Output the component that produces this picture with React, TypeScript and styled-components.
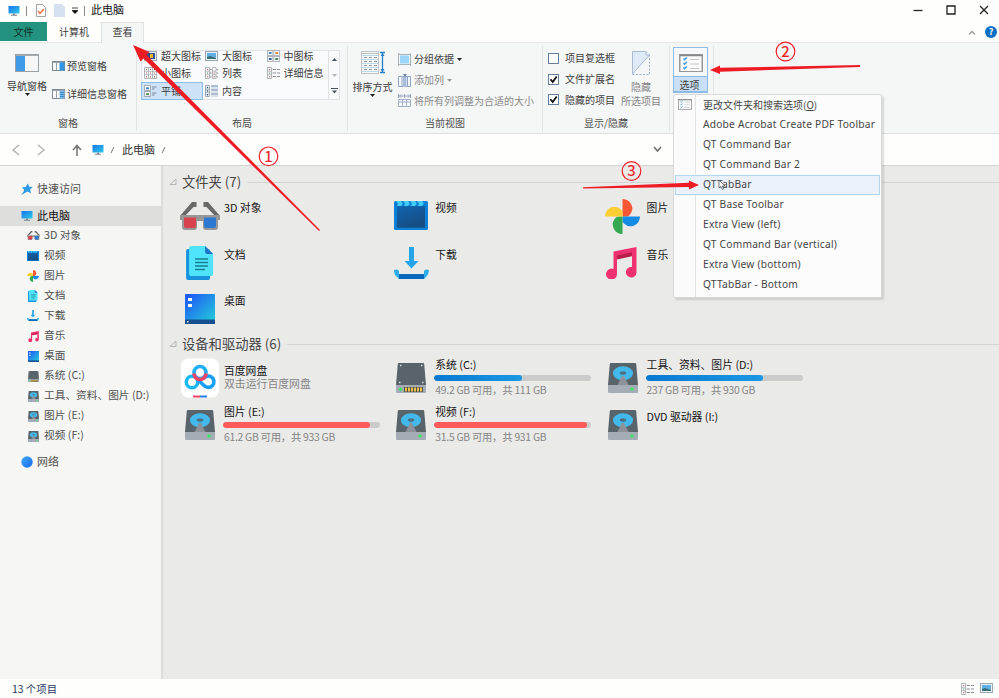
import React from "react";
import styled, { createGlobalStyle, css } from "styled-components";

const Global = createGlobalStyle`
  * { box-sizing: border-box; }
  html, body { margin: 0; padding: 0; overflow: hidden; }
  body { font-family: "Noto Sans CJK SC", sans-serif; font-size: 10px; color: #3c3c3c; background: #fefefd; }
  svg { display: block; flex: none; }
`;

const Window = styled.div`
  position: relative;
  width: 999px;
  height: 698px;
  display: flex;
  flex-direction: column;
  overflow: hidden;
  background: #fefefd;
  white-space: nowrap;
`;

/* ---------- title bar ---------- */
const TitleBar = styled.header`
  height: 22px;
  display: flex;
  align-items: flex-start;
  padding: 0 10px 0 8px;
`;
const QuickAccess = styled.div`
  display: flex;
  align-items: center;
  height: 21px;
`;
const Gap = styled.span<{ $w: number }>`
  width: ${(p) => p.$w}px;
  flex: none;
`;
const Divider = styled.span`
  width: 1px;
  height: 10px;
  background: #8a8a8a;
`;
const Title = styled.span`
  font-size: 11px;
  line-height: 18px;
  padding-bottom: 3px;
  color: #111;
`;
const Controls = styled.div`
  margin-left: auto;
  display: flex;
  align-items: center;
  gap: 23px;
  height: 20px;
`;

/* ---------- tabs ---------- */
const TabRow = styled.nav`
  height: 21px;
  display: flex;
  border-bottom: 1px solid #e8e8e8;
  padding-right: 2px;
`;
const Tab = styled.div<{ $kind?: "file" | "active" }>`
  height: 21px;
  line-height: 20px;
  text-align: center;
  color: #404040;
  width: 54px;
  ${(p) =>
    p.$kind === "file" &&
    css`
      width: 47px;
      height: 19px;
      line-height: 19px;
      background: #23927f;
      color: #10302b;
    `}
  ${(p) =>
    p.$kind === "active" &&
    css`
      width: 43px;
      background: #f5f6f6;
      border: 1px solid #e2e4e4;
      border-bottom: 0;
      line-height: 18px;
    `}
`;
const TabTools = styled.div`
  margin-left: auto;
  display: flex;
  align-items: center;
  gap: 9px;
`;

/* ---------- ribbon ---------- */
const Ribbon = styled.section`
  height: 91px;
  display: flex;
  background: #f5f6f6;
  border-bottom: 1px solid #dededf;
`;
const Group = styled.div<{ $w: number }>`
  width: ${(p) => p.$w}px;
  height: 85px;
  margin-top: 3px;
  display: flex;
  flex-direction: column;
  border-right: 1px solid #e2e3e3;
`;
const GroupBody = styled.div<{ $left: number }>`
  height: 68px;
  display: flex;
  align-items: flex-start;
  padding-left: ${(p) => p.$left}px;
`;
const GroupLabel = styled.div`
  line-height: 17px;
  height: 17px;
  text-align: center;
  margin-top: 2px;
  color: #505050;
`;
const BigButton = styled.div<{ $w: number; $dim?: boolean; $top?: number }>`
  width: ${(p) => p.$w}px;
  flex: none;
  height: 60px;
  padding-top: ${(p) => p.$top ?? 5}px;
  display: flex;
  flex-direction: column;
  align-items: center;
  color: ${(p) => (p.$dim ? "#858585" : "#3c3c3c")};
`;
const BigLabel = styled.span<{ $mt: number }>`
  line-height: 13.5px;
  margin-top: ${(p) => p.$mt}px;
`;
const SmallColumn = styled.div<{ $pitch: number; $top: number; $left: number }>`
  display: grid;
  grid-auto-rows: ${(p) => p.$pitch}px;
  margin: ${(p) => p.$top}px 0 0 ${(p) => p.$left}px;
`;
const SmallButton = styled.div<{ $dim?: boolean; $gap?: number }>`
  display: flex;
  align-items: center;
  gap: ${(p) => p.$gap ?? 2}px;
  line-height: 14px;
  color: ${(p) => (p.$dim ? "#8b8b8b" : "#404040")};
`;
const Gallery = styled.div`
  margin-top: 4px;
  width: 199px;
  height: 50px;
  display: flex;
  border: 1px solid #e1e3e6;
  background: #f9fafb;
`;
const GalleryGrid = styled.div`
  width: 186px;
  display: grid;
  grid-template-columns: 61px 61.5px 63.5px;
  grid-template-rows: 14px 17.5px 18px;
  margin-top: -1px;
`;
const GalleryItem = styled.div<{ $on?: boolean; $lift?: boolean }>`
  display: flex;
  align-items: center;
  gap: 4px;
  padding-left: 2px;
  margin-left: -1px;
  margin-top: ${(p) => (p.$lift ? -2 : 0)}px;
  line-height: 14px;
  border: 1px solid ${(p) => (p.$on ? "#8fbfe8" : "transparent")};
  background: ${(p) => (p.$on ? "#cde2f7" : "transparent")};
`;
const GalleryScroll = styled.div`
  width: 12px;
  border-left: 1px solid #e1e3e6;
  display: grid;
  grid-template-rows: repeat(3, 1fr);
  place-items: center;
`;
const CheckBox = styled.span`
  width: 11px;
  height: 11px;
  border: 1px solid #65809f;
  background: #fff;
`;
const OptionsButton = styled.div`
  width: 35px;
  height: 46px;
  margin-top: 1px;
  border: 1px solid #8dbbe5;
  display: flex;
  flex-direction: column;
  align-items: center;
  padding-top: 6px;
  background: #f6f7f8;
`;
const OptionsLabel = styled.div`
  width: 35px;
  margin-top: auto;
  height: 16px;
  line-height: 15px;
  padding-right: 2px;
  text-align: center;
  background: #c9dff5;
  border: 1px solid #8dbbe5;
`;

/* ---------- address bar ---------- */
const Address = styled.div`
  height: 32px;
  display: flex;
  align-items: center;
  padding-left: 11px;
  border-bottom: 1px solid #d4d4d4;
  font-size: 11px;
  color: #303030;
`;

/* ---------- body ---------- */
const Main = styled.div`
  height: 513px;
  display: flex;
`;
const Sidebar = styled.aside`
  width: 163px;
  flex: none;
  background: #f6f6f5;
  border-right: 2px solid #dcdcdc;
  padding-top: 13px;
`;
const TreeItem = styled.div<{ $level: 0 | 1; $on?: boolean; $after?: number }>`
  height: 20px;
  display: flex;
  align-items: center;
  font-size: ${(p) => (p.$level ? 10.7 : 11)}px;
  line-height: 18px;
  gap: ${(p) => (p.$level ? 5 : 4)}px;
  padding-left: ${(p) => (p.$level ? 27 : 21)}px;
  margin-bottom: ${(p) => p.$after ?? 0}px;
  color: ${(p) => (p.$on ? "#111" : "#505050")};
  background: ${(p) => (p.$on ? "#dededd" : "transparent")};
`;
const TreeLabel = styled.span`
  height: 20px;
`;
const Content = styled.main`
  flex: 1;
  background: #eaeae9;
  padding: 6px 0 0 6px;
`;
const Section = styled.section<{ $h: number }>`
  height: ${(p) => p.$h}px;
`;
const SectionHead = styled.div`
  height: 20px;
  display: flex;
  align-items: center;
  font-size: 13.3px;
  line-height: 20px;
  color: #454545;
  gap: 5px;
  &::after {
    content: "";
    flex: 1;
    height: 1px;
    background: #d4d4d4;
    margin-left: 1px;
  }
`;
const Tiles = styled.div`
  display: grid;
  grid-template-columns: repeat(3, 211.3px);
  grid-auto-rows: 46.6px;
  padding-left: 11px;
`;
const Tile = styled.div`
  display: flex;
  gap: 4px;
`;
const TileIcon = styled.div<{ $shift?: number }>`
  width: 40px;
  height: 48px;
  flex: none;
  display: flex;
  align-items: center;
  justify-content: center;
  padding-right: ${(p) => p.$shift ?? 0}px;
`;
const TileText = styled.div<{ $pad: number }>`
  padding-top: ${(p) => p.$pad}px;
  font-size: 10.8px;
  line-height: 14px;
  color: #151515;
`;
const Sub = styled.div<{ $narrow?: boolean }>`
  color: #858585;
  line-height: 13px;
  font-size: ${(p) => (p.$narrow ? 10.4 : 10.85)}px;
  letter-spacing: ${(p) => (p.$narrow ? -0.28 : 0)}px;
  margin-top: ${(p) => (p.$narrow ? 2 : 0)}px;
`;
const Meter = styled.div`
  width: 157px;
  height: 6px;
  margin: 4px 0 0 -1px;
  border-radius: 3px;
  background: #cbcbcb;
  overflow: hidden;
`;
const MeterFill = styled.div<{ $full?: boolean }>`
  height: 100%;
  border-radius: 3px;
  background: ${(p) => (p.$full ? "#fd5b59" : "linear-gradient(90deg,#0779d2,#1c97e2)")};
`;
const Status = styled.footer`
  height: 19px;
  display: flex;
  align-items: center;
  justify-content: space-between;
  padding: 0 6px 0 12px;
  font-size: 10.4px;
  line-height: 19px;
  color: #1e3763;
`;
const StatusViews = styled.div`
  display: flex;
  align-items: center;
  gap: 6px;
`;

/* ---------- drop-down menu ---------- */
const Menu = styled.div`
  position: absolute;
  left: 673px;
  top: 94px;
  width: 209px;
  height: 204px;
  border: 1px solid #d8d8d8;
  border-radius: 2px;
  background: linear-gradient(90deg, #fbfbfb 21px, #e2e3e5 21px, #e2e3e5 22px, #fcfcfc 22px);
  box-shadow: 2px 2px 2px rgba(0, 0, 0, 0.12);
  padding: 0 1px;
`;
const MenuItem = styled.div<{ $on?: boolean; $cjk?: boolean }>`
  height: 20px;
  display: grid;
  grid-template-columns: 27px 1fr;
  align-items: start;
  line-height: ${(p) => (p.$cjk ? 17 : 16.5)}px;
  font-family: ${(p) => (p.$cjk ? '"Noto Sans CJK SC"' : '"Noto Sans", "Noto Sans CJK SC"')}, sans-serif;
  font-size: ${(p) => (p.$cjk ? 10 : 10.2)}px;
  letter-spacing: ${(p) => (p.$cjk ? 0 : 0.22)}px;
  color: #454545;
  border: 1px solid ${(p) => (p.$on ? "#b3d6f1" : "transparent")};
  background: ${(p) => (p.$on ? "#ebf1fb" : "transparent")};
`;
const MenuIcon = styled.span`
  padding: 3px 0 0 2px;
`;
const Overlay = styled.svg`
  position: absolute;
  left: 0;
  top: 0;
  pointer-events: none;
`;

/* ---------- icons ---------- */
const Monitor = ({ s = 12 }: { s?: number }) => (
  <svg width={s} height={s} viewBox="0 0 12 12">
    <defs>
      <linearGradient id="mon" x1="0" y1="0" x2="1" y2="1">
        <stop offset="0" stopColor="#1775ee" />
        <stop offset="1" stopColor="#2fc9e6" />
      </linearGradient>
    </defs>
    <rect x="0.5" y="1" width="11" height="7.5" rx="0.5" fill="url(#mon)" />
    <path d="M5 8.5h2v1.2h2v1H3v-1h2z" fill="#7b8790" />
  </svg>
);
const Caret = ({ c = "#222", w = 5 }: { c?: string; w?: number }) => (
  <svg width={w} height="3" viewBox="0 0 5 3"><path d="M0 0h5L2.5 3z" fill={c} /></svg>
);
const PaneIcon = ({ kind }: { kind: "nav" | "preview" | "detail" }) => {
  if (kind === "nav")
    return (
      <svg width="24" height="18" viewBox="0 0 24 18">
        <rect x="0.5" y="0.5" width="23" height="17" fill="#f6f6f6" stroke="#9aa0a4" />
        <path d="M1 1h22v1H1z" fill="#a5abaf" />
        <path d="M1 2h9v15H1z" fill="#3f9be8" />
      </svg>
    );
  return (
    <svg width="13" height="10" viewBox="0 0 13 10">
      <rect x="0.5" y="0.5" width="12" height="9" fill="#fafafa" stroke="#7f8a92" />
      <path d="M4.5 1v8M1 1.5h11" stroke="#9aa3aa" />
      <path d="M7.5 1.5h5v8h-5z" fill={kind === "preview" ? "#3195e4" : "#7bbcec"} />
      {kind === "detail" && <path d="M8 3.5h4M8 5.5h4M8 7.5h4" stroke="#397fb5" strokeWidth="0.8" />}
    </svg>
  );
};
const Picture = () => (
  <svg width="13" height="11" viewBox="0 0 13 11">
    <rect x="0.5" y="0.5" width="12" height="9" fill="#eaf3fa" stroke="#9aa5ad" />
    <path d="M2 2h9v4H2z" fill="#60aee8" />
    <path d="M2 8V6l3-1 3 1 3 .5V8z" fill="#386e75" />
  </svg>
);
const ExtraPicture = () => (
  <svg width="13" height="11" viewBox="0 0 13 11">
    <rect x="0.5" y="0.5" width="12" height="9" fill="#eef2f5" stroke="#9aa5ad" />
    <path d="M2 2h9v6H2z" fill="#2f4f88" />
    <path d="M6 3h3v4H6z" fill="#e5b53a" />
  </svg>
);
const ViewIcon = ({ kind }: { kind: "medium" | "small" | "list" | "details" | "tiles" | "content" }) => (
  <svg width="13" height="12" viewBox="0 0 13 12">
    {kind === "medium" &&
      [[0, 0], [6.5, 0], [0, 6], [6.5, 6]].map(([x, y]) => (
        <g key={`${x}-${y}`}>
          <rect x={x + 0.4} y={y + 0.4} width="5.5" height="5" fill="#fff" stroke="#9ba4ab" strokeWidth="0.8" />
          <rect x={x + 1.8} y={y + 2} width="2.8" height="2" fill={x ? (y ? "#51805d" : "#d78a3f") : y ? "#315fa2" : "#4c88c4"} />
        </g>
      ))}
    {kind === "small" && (
      <g>
        <path d="M0.5 0.5h12v11H.5zM4.5 0v12M8.5 0v12M0 4.2h13M0 7.8h13" fill="#fff" stroke="#abaeb2" strokeWidth="0.9" />
        <path d="M2 2.5h1M6 2.5h1M10 2.5h1M2 6h1M6 6h1M10 6h1M2 9.8h1M6 9.8h1M10 9.8h1" stroke="#a4544c" strokeWidth="1.2" />
      </g>
    )}
    {(kind === "list" || kind === "details") && (
      <g>
        <path d="M.5 .5h4v11h-4zM.5 4.2h4M.5 7.8h4" fill="#fff" stroke="#a9aeb3" strokeWidth="0.9" />
        <path d="M2 2.5h1.2M2 9.8h1.2" stroke="#c05a50" />
        <path d="M2 6h1.2" stroke="#418a5d" />
        {kind === "list" ? (
          <g>
            <path d="M7.5 .5h3.5v11H7.5zM7.5 4.2H11M7.5 7.8H11" fill="#fff" stroke="#a9aeb3" strokeWidth="0.9" />
            <path d="M5 2.5h1.6M5 6h1.6M5 9.8h1.6M11.5 2.5H13M11.5 6H13M11.5 9.8H13" stroke="#858b92" />
            <path d="M8.6 6h1.2M8.6 9.8h1.2" stroke="#a4544c" />
          </g>
        ) : (
          <path d="M5.5 2.5H9M10 2.5h3M5.5 6H9M10 6h3M5.5 9.5H9M10 9.5h3" stroke="#8b9299" />
        )}
      </g>
    )}
    {kind === "tiles" && (
      <g>
        <path d="M.5 .5h6v5h-6zM.5 6.5h6v5h-6z" fill="#fff" stroke="#97a3ad" strokeWidth="0.9" />
        <path d="M2 3.3h3" stroke="#3b86c9" strokeWidth="2" />
        <path d="M2 9.2h3" stroke="#508b51" strokeWidth="2" />
        <path d="M8 2h4.5M8 4h2.5M8 8h4.5M8 10h2.5" stroke="#7e8b99" />
      </g>
    )}
    {kind === "content" && (
      <g>
        <path d="M.5 .5h4v11h-4zM.5 4.2h4M.5 7.8h4" fill="#fff" stroke="#98a2ab" strokeWidth="0.9" />
        <path d="M1.7 2.4h1.6M1.7 6h1.6M1.7 9.8h1.6" stroke="#32649b" strokeWidth="1.5" />
        <path d="M6 1h7M6 5h7M6 9h7" stroke="#5d83a9" />
        <path d="M6 3h7M6 7h7M6 11h7" stroke="#bac9d8" />
      </g>
    )}
  </svg>
);
const SortIcon = () => (
  <svg width="24" height="24" viewBox="0 0 24 24">
    <rect x="0.5" y="0.5" width="17" height="22" fill="#f8fafa" stroke="#c0c4c7" />
    <path d="M1 2.5h16" stroke="#b9bec2" />
    <path d="M1 4.5h16M1 8.5h16M1 12.5h16M1 16.5h16M1 20.5h16" stroke="#b9d9e9" />
    <path d="M3 6.5h3M8 6.5h3M13 6.5h3M3 10.5h3M8 10.5h3M13 10.5h3M3 14.5h3M8 14.5h3M13 14.5h3M3 18.5h3M8 18.5h3M13 18.5h3" stroke="#8d969d" />
    <path d="M21.5 1v21M19 1.5h5M19 21.5h5" stroke="#267fc8" strokeWidth="1.3" />
    <path d="M19.5 5l2-3 2 3zM19.5 18l2 3 2-3z" fill="#267fc8" />
  </svg>
);
const GroupIcon = () => (
  <svg width="13" height="13" viewBox="0 0 13 13">
    <path d="M.5 0v13M12.5 0v13M0 1.5h13M0 11.5h13" stroke="#a9b2b9" />
    <path d="M2 2.5h9v8H2z" fill="#9bd5fa" />
  </svg>
);
const AddColumnIcon = () => (
  <svg width="13" height="13" viewBox="0 0 13 13">
    <path d="M.5 2.5h12v10H.5zM4 2v11M9.5 2v11" fill="#f5f8fd" stroke="#93a5c4" />
    <path d="M5 3h3.5v10H5z" fill="#a9bcdb" />
    <path d="M5 0h4L7 3z" fill="#6e86ac" />
  </svg>
);
const FitIcon = () => (
  <svg width="13" height="13" viewBox="0 0 13 13">
    <path d="M.5 0v4M12.5 0v4M1 2h11M3 .5L1.5 2 3 3.5M10 .5L11.5 2 10 3.5M6.5 0v4" stroke="#98a7c0" fill="none" />
    <path d="M.5 5.5h12v7H.5zM.5 8h12M4.5 5v8M8.5 5v8" fill="#f5f8fd" stroke="#a2afc8" />
  </svg>
);
const HideIcon = () => (
  <svg width="18" height="24" viewBox="0 0 18 24">
    <path d="M.5 .5H14l3.5 3.5L.5 23z" fill="#dfeaf7" stroke="#a9bad2" />
    <path d="M14 .5V4h3.5" fill="#f8fafc" stroke="#a9bad2" />
    <path d="M.5 23.5h17V4" fill="none" stroke="#9eb0ca" strokeDasharray="2 1.5" />
  </svg>
);
const OptionsIcon = ({ w = 24 }: { w?: number }) => (
  <svg width={w} height={w * 0.77} viewBox="0 0 24 18.5">
    <rect x="0.75" y="0.75" width="22.5" height="17" fill="#fbfbfb" stroke="#979797" strokeWidth="1.5" />
    <path d="M1 1.5h22" stroke="#868686" strokeWidth="1.5" />
    <path d="M4.5 4.5l1 1.2L8 3.5M4.5 9l1 1.2L8 8M4.5 13.5l1 1.2L8 12.5" fill="none" stroke="#3f9ce5" strokeWidth="1.5" />
    <path d="M11 5.5h9M11 10h9M11 14.5h9" stroke="#c3c6c9" strokeWidth="1.2" />
  </svg>
);
const Glasses = ({ s }: { s: number }) => (
  <svg width={s} height={s * 0.7} viewBox="0 0 40 28">
    <path d="M12 0h4.5v5h-3L5 14H0zM28 0h-4.500v5h3l8.500 9h5z" fill="#686868" />
    <path d="M0 13h40v5h-2v7q0 3-3 3H26q-3 0-3-3v-6h-6v6q0 3-3 3H5q-3 0-3-3v-7H0z" fill="#979797" />
    <path d="M4 15.5h12v8.500q0 2-2 2H6q-2 0-2-2z" fill="#d8424f" />
    <path d="M24 15.5h12v8.500q0 2-2 2h-8q-2 0-2-2z" fill="#2c78d2" />
  </svg>
);
const Video = ({ s }: { s: number }) => (
  <svg width={s} height={s * 0.86} viewBox="0 0 34 29">
    <defs>
      <linearGradient id="vid" x1="0" y1="0" x2="0.5" y2="1">
        <stop offset="0" stopColor="#1064ae" />
        <stop offset="1" stopColor="#174d84" />
      </linearGradient>
    </defs>
    <rect width="34" height="29" rx="1.5" fill="#0c7fd6" />
    <rect x="3" y="5" width="28" height="21.5" fill="url(#vid)" />
    <path d="M2 0h5q3 2.5 0 5H3q2-2.5-1-5zM9 0h5q3 2.5 0 5h-4q2-2.5-1-5zM16 0h5q3 2.5 0 5h-4q2-2.5-1-5zM23 0h5q3 2.5 0 5h-4q2-2.5-1-5z" fill="#42cdf8" />
  </svg>
);
const Photos = ({ s }: { s: number }) => (
  <svg width={s} height={s} viewBox="0 0 35 35">
    <path d="M17.5 0a10 9.500 0 0 1 7 16q-1 1.500-3 1.500h-4z" fill="#f95632" />
    <path d="M35 17.5a9.500 10 0 0 1-16 7q-1.500-1-1.500-3v-4z" fill="#158be3" />
    <path d="M17.5 35a10 9.500 0 0 1-7-16q1-1.500 3-1.500h4z" fill="#35a852" />
    <path d="M0 17.5a9.500 10 0 0 1 16-7q1.500 1 1.500 3v4z" fill="#fdcd36" />
  </svg>
);
const Docs = ({ s }: { s: number }) => (
  <svg width={s * 0.8} height={s} viewBox="0 0 27 34">
    <rect y="3" width="24" height="31" rx="2" fill="#1693dc" />
    <path d="M5 0h14l8 8v20q0 2-2 2H5q-2 0-2-2V2q0-2 2-2z" fill="#50e4fc" />
    <path d="M19 0l8 8h-6q-2 0-2-2z" fill="#1e72c7" />
    <path d="M9 13h13M9 16.5h13M9 20h13M9 23.5h10" stroke="#12808f" strokeWidth="1.4" />
  </svg>
);
const Download = ({ s }: { s: number }) => (
  <svg width={s} height={s * 0.92} viewBox="0 0 35 32">
    <path d="M15 0h5v14h4.500L17.500 21.500 10.500 14H15z" fill="#26a5e8" />
    <path d="M0 23q4-1.5 5 1v3h25v-3q1-2.5 5-1-.5 5-3 7l-2 2H5l-2-2q-3-2-3-7z" fill="#2caee8" />
    <path d="M5 27h25v5H5z" fill="#0868b9" />
  </svg>
);
const Music = ({ s }: { s: number }) => (
  <svg width={s} height={s} viewBox="0 0 31 32">
    <path d="M8 4.5L31 0v25.5A5.3 5.3 0 1 1 26.5 20V8.5L11.5 11.5v16A5.5 5.5 0 1 1 8 22z" fill="#ee3170" />
    <path d="M11.5 8.5l15-3.2v4l-15 3.2z" fill="#b91f4b" />
  </svg>
);
const Desktop = ({ s }: { s: number }) => (
  <svg width={s} height={s} viewBox="0 0 30 30">
    <defs>
      <linearGradient id="desk" x1="0" y1="0" x2="1" y2="1">
        <stop offset="0.1" stopColor="#1e5df5" />
        <stop offset="1" stopColor="#24d3d7" />
      </linearGradient>
    </defs>
    <rect width="30" height="30" rx="0.8" fill="url(#desk)" />
    <path d="M0 25.5h30V30H0z" fill="#15518f" />
    <path d="M3 4h4v3H3zM3 10h4v3H3zM2 27h1.5v1.5H2z" fill="#fff" />
  </svg>
);
const Disk = ({ s, ssd }: { s: number; ssd?: boolean }) => (
  <svg width={s} height={s} viewBox="0 0 30 30">
    <path d="M3 0h24q1 0 1.2 1L30 22H0L1.8 1Q2 0 3 0z" fill="#59636a" />
    <path d="M0 22h30v7q0 1-1 1H1q-1 0-1-1z" fill="#a6acb6" />
    {ssd ? (
      <g>
        <path d="M4 2.5h1.5M25 2.5h1.5M3 19.5h1.5M26 19.5h1.5" stroke="#d8dee2" strokeWidth="1.5" />
        <rect x="8" y="24" width="19" height="5" fill="#4b4d4e" />
        <path d="M9 26.5h17" stroke="#efc34b" strokeWidth="4" strokeDasharray="2 1" />
        <circle cx="4.5" cy="26.3" r="1.7" fill="#3be566" />
      </g>
    ) : (
      <g>
        <ellipse cx="15" cy="10.3" rx="10" ry="7" fill="#43b9eb" />
        <ellipse cx="15" cy="10" rx="3.2" ry="1.8" fill="#4d7182" />
        <path d="M14 13h2l4.5 9h-11z" fill="#8c9297" />
        <circle cx="24" cy="26" r="1.8" fill="#3be566" />
      </g>
    )}
  </svg>
);
const CloudDisk = () => (
  <svg width="40" height="40" viewBox="0 0 40 40">
    <rect x="1" y="0.5" width="38" height="39" rx="7" fill="#fff" />
    <circle cx="12" cy="24" r="5.7" fill="none" stroke="#19b9f5" strokeWidth="3.6" />
    <path d="M16.5 20.5L24 27.5a5.7 5.7 0 1 0-.8-6.500" fill="none" stroke="#189ff7" strokeWidth="3.6" />
    <circle cx="20" cy="14.5" r="6" fill="#fff" stroke="#20aef6" strokeWidth="3.6" />
    <path d="M14 15.5a6 6 0 0 0 12 0" fill="none" stroke="#f54368" strokeWidth="3.6" />
    <path d="M13 37.5h7v2h-7z" fill="#f54368" />
    <path d="M20 37.5h7v2h-7z" fill="#2480f5" />
  </svg>
);
const Star = () => (
  <svg width="12" height="12" viewBox="0 0 12 12">
    <path d="M7 .5l1.2 3.3 3.6.2-2.7 2.4 1 4-3.4-2-3 1.7L0 12l2.7-3.6.4-1.6L.8 4.5l3.7-.4z" fill="#2d9be6" />
  </svg>
);
const Globe = () => (
  <svg width="12" height="12" viewBox="0 0 12 12">
    <defs>
      <linearGradient id="globe" x1="0" y1="0" x2="1" y2="1">
        <stop offset="0" stopColor="#43aaf5" />
        <stop offset="1" stopColor="#1468ea" />
      </linearGradient>
    </defs>
    <circle cx="6" cy="6" r="5.7" fill="url(#globe)" />
  </svg>
);
const Chevron = ({ d, w, h, c, sw = 1.3 }: { d: string; w: number; h: number; c: string; sw?: number }) => (
  <svg width={w} height={h} viewBox={`0 0 ${w} ${h}`}>
    <path d={d} fill="none" stroke={c} strokeWidth={sw} />
  </svg>
);
const Triangle = () => (
  <svg width="8" height="8" viewBox="0 0 8 8"><path d="M7 1v5.5H1z" fill="none" stroke="#b5b5b5" /></svg>
);

/* ---------- data ---------- */
const tree: { name: string; icon: React.ReactNode }[] = [
  { name: "3D 对象", icon: <Glasses s={13} /> },
  { name: "视频", icon: <Video s={12} /> },
  { name: "图片", icon: <Photos s={12} /> },
  { name: "文档", icon: <Docs s={12} /> },
  { name: "下载", icon: <Download s={12} /> },
  { name: "音乐", icon: <Music s={11} /> },
  { name: "桌面", icon: <Desktop s={11} /> },
  { name: "系统 (C:)", icon: <Disk s={11} ssd /> },
  { name: "工具、资料、图片 (D:)", icon: <Disk s={11} /> },
  { name: "图片 (E:)", icon: <Disk s={11} /> },
  { name: "视频 (F:)", icon: <Disk s={11} /> },
];
const folders: { name: string; icon: React.ReactNode; shift?: number }[] = [
  { name: "3D 对象", icon: <Glasses s={40} /> },
  { name: "视频", icon: <Video s={34} /> },
  { name: "图片", icon: <Photos s={35} /> },
  { name: "文档", icon: <Docs s={34} /> },
  { name: "下载", icon: <Download s={35} /> },
  { name: "音乐", icon: <Music s={32} />, shift: 4 },
  { name: "桌面", icon: <Desktop s={30} /> },
];
const drives = [
  { name: "系统 (C:)", sub: "49.2 GB 可用，共 111 GB", used: 56, ssd: true },
  { name: "工具、资料、图片 (D:)", sub: "237 GB 可用，共 930 GB", used: 75 },
  { name: "图片 (E:)", sub: "61.2 GB 可用，共 933 GB", used: 93.5 },
  { name: "视频 (F:)", sub: "31.5 GB 可用，共 931 GB", used: 97.5 },
];
const menuItems = [
  "Adobe Acrobat Create PDF Toolbar",
  "QT Command Bar",
  "QT Command Bar 2",
  "QTTabBar",
  "QT Base Toolbar",
  "Extra View (left)",
  "QT Command Bar (vertical)",
  "Extra View (bottom)",
  "QTTabBar - Bottom",
];
const checks: [string, boolean][] = [["项目复选框", false], ["文件扩展名", true], ["隐藏的项目", true]];

const IconSlot = styled.span`
  width: 12px;
  display: flex;
  justify-content: center;
`;
const Crumb = styled.span`
  line-height: 18px;
  padding-bottom: 1px;
`;

const Marker = ({ x, y, n }: { x: number; y: number; n: number }) => (
  <g>
    <circle cx={x} cy={y} r="9.3" fill="none" stroke="#ed1c24" strokeWidth="1.2" />
    <text x={x} y={y + 5.3} textAnchor="middle" fontFamily="Noto Sans CJK SC, sans-serif" fontSize="15" fill="#ed1c24" stroke="#ed1c24" strokeWidth="0.2">{n}</text>
  </g>
);

export default function App() {
  return (
    <Window>
      <Global />
      <TitleBar>
        <QuickAccess>
          <Monitor />
          <Gap $w={6} />
          <Divider />
          <Gap $w={9} />
          <svg width="10" height="13" viewBox="0 0 10 13">
            <path d="M.5 .5h6l3 3v9h-9z" fill="#fff" stroke="#a3a3a3" />
            <path d="M2 7l2 2.5L8 5" fill="none" stroke="#ec6b3d" strokeWidth="1.4" />
          </svg>
          <Gap $w={8} />
          <svg width="11" height="13" viewBox="0 0 11 13"><path d="M0 0h8l3 3v10H0z" fill="#d5e1f1" /></svg>
          <Gap $w={7} />
          <svg width="6" height="7" viewBox="0 0 6 7"><path d="M0 1h6M0 3.5h6L3 6.5z" stroke="#222" strokeWidth="0.8" /></svg>
          <Gap $w={6} />
          <Divider />
          <Gap $w={6} />
          <Title>此电脑</Title>
        </QuickAccess>
        <Controls>
          <Chevron w={10} h={10} c="#222" d="M0.5 5.5h9" />
          <Chevron w={10} h={10} c="#222" d="M1 1h8v8H1z" />
          <Chevron w={10} h={10} c="#222" d="M1 1l8 8M9 1l-8 8" />
        </Controls>
      </TitleBar>
      <TabRow>
        <Tab $kind="file">文件</Tab>
        <Tab>计算机</Tab>
        <Tab $kind="active">查看</Tab>
        <TabTools>
          <Chevron w={8} h={5} c="#999" d="M1 4.5l3-3 3 3" />
          <svg width="12" height="12" viewBox="0 0 12 12">
            <circle cx="6" cy="6" r="6" fill="#0b6fc4" />
            <text x="6" y="9.3" textAnchor="middle" fontSize="9" fontWeight="bold" fill="#fff">?</text>
          </svg>
        </TabTools>
      </TabRow>
      <Ribbon>
        <Group $w={137}>
          <GroupBody $left={7}>
            <BigButton $w={40} $top={8}>
              <PaneIcon kind="nav" />
              <BigLabel $mt={7}>导航窗格</BigLabel>
              <Caret />
            </BigButton>
            <SmallColumn $pitch={28} $top={6} $left={5}>
              <SmallButton><PaneIcon kind="preview" />预览窗格</SmallButton>
              <SmallButton><PaneIcon kind="detail" />详细信息窗格</SmallButton>
            </SmallColumn>
          </GroupBody>
          <GroupLabel>窗格</GroupLabel>
        </Group>
        <Group $w={211}>
          <GroupBody $left={4}>
            <Gallery>
              <GalleryGrid>
                <GalleryItem $lift><ExtraPicture />超大图标</GalleryItem>
                <GalleryItem $lift><Picture />大图标</GalleryItem>
                <GalleryItem $lift><ViewIcon kind="medium" />中图标</GalleryItem>
                <GalleryItem><ViewIcon kind="small" />小图标</GalleryItem>
                <GalleryItem><ViewIcon kind="list" />列表</GalleryItem>
                <GalleryItem><ViewIcon kind="details" />详细信息</GalleryItem>
                <GalleryItem $on><ViewIcon kind="tiles" />平铺</GalleryItem>
                <GalleryItem><ViewIcon kind="content" />内容</GalleryItem>
              </GalleryGrid>
              <GalleryScroll>
                <svg width="5" height="3" viewBox="0 0 5 3"><path d="M0 3h5L2.5 0z" fill="#4b5560" /></svg>
                <Caret c="#b4b9be" />
                <svg width="7" height="6" viewBox="0 0 7 6"><path d="M0 0h7v1H0zM1 2.5h5L3.5 5.5z" fill="#4b5560" /></svg>
              </GalleryScroll>
            </Gallery>
          </GroupBody>
          <GroupLabel>布局</GroupLabel>
        </Group>
        <Group $w={195}>
          <GroupBody $left={4}>
            <BigButton $w={41}>
              <SortIcon />
              <BigLabel $mt={5}>排序方式</BigLabel>
              <Caret />
            </BigButton>
            <SmallColumn $pitch={20.8} $top={3} $left={5}>
              <SmallButton $gap={3}><GroupIcon />分组依据<Caret /></SmallButton>
              <SmallButton $gap={3} $dim><AddColumnIcon />添加列<Caret c="#999" /></SmallButton>
              <SmallButton $gap={3} $dim><FitIcon />将所有列调整为合适的大小</SmallButton>
            </SmallColumn>
          </GroupBody>
          <GroupLabel>当前视图</GroupLabel>
        </Group>
        <Group $w={127}>
          <GroupBody $left={5}>
            <SmallColumn $pitch={20.8} $top={2} $left={0}>
              {checks.map(([t, on]) => (
                <SmallButton key={t} $gap={6}>
                  <CheckBox>
                    {on && <Chevron w={9} h={9} c="#111" sw={1.8} d="M1.5 4.3L3.7 7 7.7 1.5" />}
                  </CheckBox>
                  {t}
                </SmallButton>
              ))}
            </SmallColumn>
            <Gap $w={6} />
            <BigButton $w={40} $dim>
              <HideIcon />
              <BigLabel $mt={5}>隐藏</BigLabel>
              <BigLabel $mt={0}>所选项目</BigLabel>
            </BigButton>
          </GroupBody>
          <GroupLabel>显示/隐藏</GroupLabel>
        </Group>
        <Group $w={44}>
          <GroupBody $left={3}>
            <OptionsButton>
              <OptionsIcon />
              <OptionsLabel>选项</OptionsLabel>
            </OptionsButton>
          </GroupBody>
        </Group>
      </Ribbon>
      <Address>
        <Chevron w={9} h={12} c="#b0b0b0" d="M8 1L2 6l6 5" />
        <Gap $w={17} />
        <Chevron w={9} h={12} c="#b0b0b0" d="M1 1l6 5-6 5" />
        <Gap $w={26} />
        <Chevron w={10} h={12} c="#777" sw={1.6} d="M5 12V2M1 6l4-4.5L9 6" />
        <Gap $w={10} />
        <Monitor />
        <Gap $w={6} />
        <Chevron w={5} h={8} c="#777" sw={1} d="M1 7l3-6" />
        <Gap $w={7} />
        <Crumb>此电脑</Crumb>
        <Gap $w={6} />
        <Chevron w={5} h={8} c="#777" sw={1} d="M1 7l3-6" />
        <Gap $w={487} />
        <Chevron w={9} h={7} c="#707070" sw={1.6} d="M1 1l3.5 4L8 1" />
      </Address>
      <Main>
        <Sidebar>
          <TreeItem $level={0} $after={7}><Star /><TreeLabel>快速访问</TreeLabel></TreeItem>
          <TreeItem $level={0} $on><Monitor /><TreeLabel>此电脑</TreeLabel></TreeItem>
          {tree.map((t) => (
            <TreeItem key={t.name} $level={1} $after={t.name === "视频 (F:)" ? 6 : 0}>
              <IconSlot>{t.icon}</IconSlot>
              <TreeLabel>{t.name}</TreeLabel>
            </TreeItem>
          ))}
          <TreeItem $level={0}><Globe /><TreeLabel>网络</TreeLabel></TreeItem>
        </Sidebar>
        <Content>
          <Section $h={162}>
            <SectionHead><Triangle />文件夹 (7)</SectionHead>
            <Tiles>
              {folders.map((f) => (
                <Tile key={f.name}>
                  <TileIcon $shift={f.shift}>{f.icon}</TileIcon>
                  <TileText $pad={8}>{f.name}</TileText>
                </Tile>
              ))}
            </Tiles>
          </Section>
          <Section $h={180}>
            <SectionHead><Triangle />设备和驱动器 (6)</SectionHead>
            <Tiles>
              <Tile>
                <TileIcon><CloudDisk /></TileIcon>
                <TileText $pad={9}>百度网盘<Sub>双击运行百度网盘</Sub></TileText>
              </Tile>
              {drives.map((d) => (
                <Tile key={d.name}>
                  <TileIcon><Disk s={30} ssd={d.ssd} /></TileIcon>
                  <TileText $pad={3}>
                    {d.name}
                    <Meter><MeterFill $full={d.used > 90} style={{ width: `${d.used}%` }} /></Meter>
                    <Sub $narrow>{d.sub}</Sub>
                  </TileText>
                </Tile>
              ))}
              <Tile>
                <TileIcon><Disk s={30} /></TileIcon>
                <TileText $pad={8}>DVD 驱动器 (I:)</TileText>
              </Tile>
            </Tiles>
          </Section>
        </Content>
      </Main>
      <Status>
        <span>13 个项目</span>
        <StatusViews><ViewIcon kind="details" /><Picture /></StatusViews>
      </Status>
      <Menu>
        <MenuItem $cjk>
          <MenuIcon><OptionsIcon w={14} /></MenuIcon>
          <span>更改文件夹和搜索选项(<u>O</u>)</span>
        </MenuItem>
        {menuItems.map((m) => (
          <MenuItem key={m} $on={m === "QTTabBar"}><span /><span>{m}</span></MenuItem>
        ))}
      </Menu>
      <Overlay width="999" height="698" viewBox="0 0 999 698">
        <g fill="#ed1c24">
          <path d="M133 45l16.5 7-3 2.7L320 230l-1 1L143.5 58.5l-3 3z" />
          <path d="M710 70l10-4.5v2.3L860 65v2L720 71.8v2.2z" />
          <path d="M699 185l-10-4.5v2.3L583 187.2v1.2L689 187v2.5z" />
        </g>
        <path d="M719 180v8l2-1.5 1.5 3 1.2-.7-1.3-2.8h2.5z" fill="#fff" stroke="#444" strokeWidth="0.7" />
        <Marker x={268.5} y={156.3} n={1} />
        <Marker x={785.5} y={51.5} n={2} />
        <Marker x={631.5} y={171} n={3} />
      </Overlay>
    </Window>
  );
}
